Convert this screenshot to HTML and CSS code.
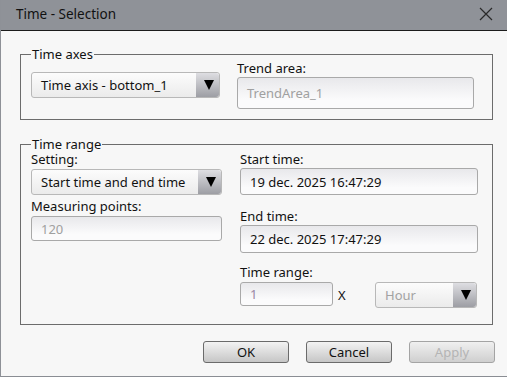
FILE: index.html
```html
<!DOCTYPE html>
<html>
<head>
<meta charset="utf-8">
<link rel="stylesheet" href="styles.css">
</head>
<body>
<div class="window">
  <div class="titlebar">
    <span class="title">Time - Selection</span>
    <svg class="close" width="14" height="14" viewBox="0 0 14 14"><path d="M1 1 L13 13 M13 1 L1 13" stroke="#2a2a2a" stroke-width="1.2" fill="none"/></svg>
  </div>
  <div class="content">
    <fieldset class="group g1">
      <legend>Time axes</legend>
      <div class="cols">
        <div class="col left1">
          <div class="combo c1"><span class="val">Time axis - bottom_1</span><span class="arrow"><svg width="10" height="10" viewBox="0 0 10 10"><path d="M0 0 H10 L5 10 Z" fill="#000"/></svg></span></div>
        </div>
        <div class="col right1">
          <div class="label lbl-trend">Trend area:</div>
          <div class="field f-trend disabled">TrendArea_1</div>
        </div>
      </div>
    </fieldset>
    <fieldset class="group g2">
      <legend>Time range</legend>
      <div class="cols">
        <div class="col left2">
          <div class="label lbl-setting">Setting:</div>
          <div class="combo c2"><span class="val">Start time and end time</span><span class="arrow"><svg width="10" height="10" viewBox="0 0 10 10"><path d="M0 0 H10 L5 10 Z" fill="#000"/></svg></span></div>
          <div class="label lbl-meas">Measuring points:</div>
          <div class="field f-meas disabled">120</div>
        </div>
        <div class="col right2">
          <div class="label lbl-start">Start time:</div>
          <div class="field f-time f-start">19 dec. 2025 16:47:29</div>
          <div class="label lbl-end">End time:</div>
          <div class="field f-time f-end">22 dec. 2025 17:47:29</div>
          <div class="label lbl-range">Time range:</div>
          <div class="range-row">
            <div class="field f-num">1</div>
            <span class="x">X</span>
            <div class="combo c3 disabled"><span class="val">Hour</span><span class="arrow"><svg width="10" height="10" viewBox="0 0 10 10"><path d="M0 0 H10 L5 10 Z" fill="#000"/></svg></span></div>
          </div>
        </div>
      </div>
    </fieldset>
    <div class="buttons">
      <button class="btn">OK</button>
      <button class="btn">Cancel</button>
      <button class="btn btn-disabled">Apply</button>
    </div>
  </div>
</div>
</body>
</html>
```

FILE: styles.css
```css
* { box-sizing: border-box; }
html, body { margin: 0; padding: 0; }
body {
  width: 507px;
  height: 377px;
  overflow: hidden;
  font-family: "Noto Sans", "Open Sans", sans-serif;
  font-size: 13px;
  color: #111;
  background: #f7f7f7;
}
.window {
  width: 507px;
  height: 377px;
  border-left: 1px solid #8e9197;
  border-bottom: 1px solid #8a8d93;
  background: #f7f7f7;
}
.titlebar {
  height: 31px;
  background: #8f9298;
  border-bottom: 1px solid #1c1c1c;
  display: flex;
  align-items: center;
  justify-content: space-between;
  padding: 0 14px 2px 15px;
}
.title {
  font-size: 13.5px;
  color: #111;
}
.close { display: block; }
.content {
  padding: 16px 0 0 19px;
}
.group {
  margin: 0;
  padding: 0;
  border: 1px solid #6c6c6c;
  width: 473px;
  min-width: 0;
}
.group legend {
  margin-left: 10px;
  padding: 0 1px;
  font-size: 13px;
  line-height: 15px;
  height: 15px;
}
.g2 { margin-top: 17px; }
.cols {
  display: flex;
  padding-left: 10px;
}
.col { display: flex; flex-direction: column; }
.label { line-height: 15px; height: 15px; }

.g1 .cols { padding-bottom: 10px; }
.left1 { width: 189px; }
.c1 { margin-top: 10px; height: 26px; }
.right1 { width: 237px; margin-left: 17px; }
.lbl-trend { margin-top: -1px; }
.f-trend { margin-top: 1px; height: 32px; }

.g2 .cols { padding-bottom: 16px; }
.left2 { width: 191px; }
.lbl-setting { margin-top: 1px; line-height: 13px; height: 13px; }
.c2 { margin-top: 3px; height: 26px; }
.lbl-meas { margin-top: 4px; }
.f-meas { margin-top: 2px; height: 25px; }
.right2 { width: 238px; margin-left: 18px; }
.lbl-start { margin-top: 1px; line-height: 13px; height: 13px; }
.f-time { margin-top: 1px; color: #111; }
.f-start { height: 27px; margin-top: 2px; }
.f-end { height: 28px; }
.lbl-end { margin-top: 14px; }
.lbl-range { margin-top: 12px; }
.range-row { display: flex; align-items: flex-start; margin-top: 2px; }
.f-num { width: 93px; height: 24px; padding-left: 3px; color: #9a86a6; }
.x { margin-left: 5px; line-height: 26px; width: 37px; }
.c3 { width: 102px; height: 26px; }

.combo {
  display: flex;
  align-items: stretch;
  border: 1px solid #b8b8b8;
  border-radius: 3px;
  background: linear-gradient(#fcfcfc, #ebebeb);
}
.combo .val {
  flex: 1;
  display: flex;
  align-items: center;
  padding-left: 9px;
  white-space: nowrap;
  overflow: hidden;
}
.combo.disabled .val { color: #a2a2a2; }
.combo .arrow {
  width: 23px;
  display: flex;
  align-items: center;
  justify-content: center;
  padding-left: 2px;
  border-radius: 0 3px 3px 0;
  background: linear-gradient(#dedee2, #9d9ea4);
}
.combo .arrow svg { display: block; }
.field {
  display: flex;
  align-items: center;
  padding-left: 9px;
  border: 1px solid #a9a9a9;
  border-radius: 3px;
  background: linear-gradient(#e8e8eb, #fbfbfc 75%);
  white-space: nowrap;
}
.field.disabled { color: #a0a0a0; }

.buttons {
  display: flex;
  justify-content: flex-end;
  gap: 17px;
  margin-top: 16px;
  padding-right: 12px;
}
.btn {
  width: 86px;
  height: 22px;
  padding: 0;
  font-family: inherit;
  font-size: 13px;
  color: #111;
  border: 1px solid #6b6b6b;
  border-radius: 3px;
  background: linear-gradient(#f3f3f3, #c6c6c6);
}
.btn-disabled {
  color: #b4b4b4;
  border-color: #a4a4a4;
  background: linear-gradient(#f0f0f0, #cfcfcf);
}
```
